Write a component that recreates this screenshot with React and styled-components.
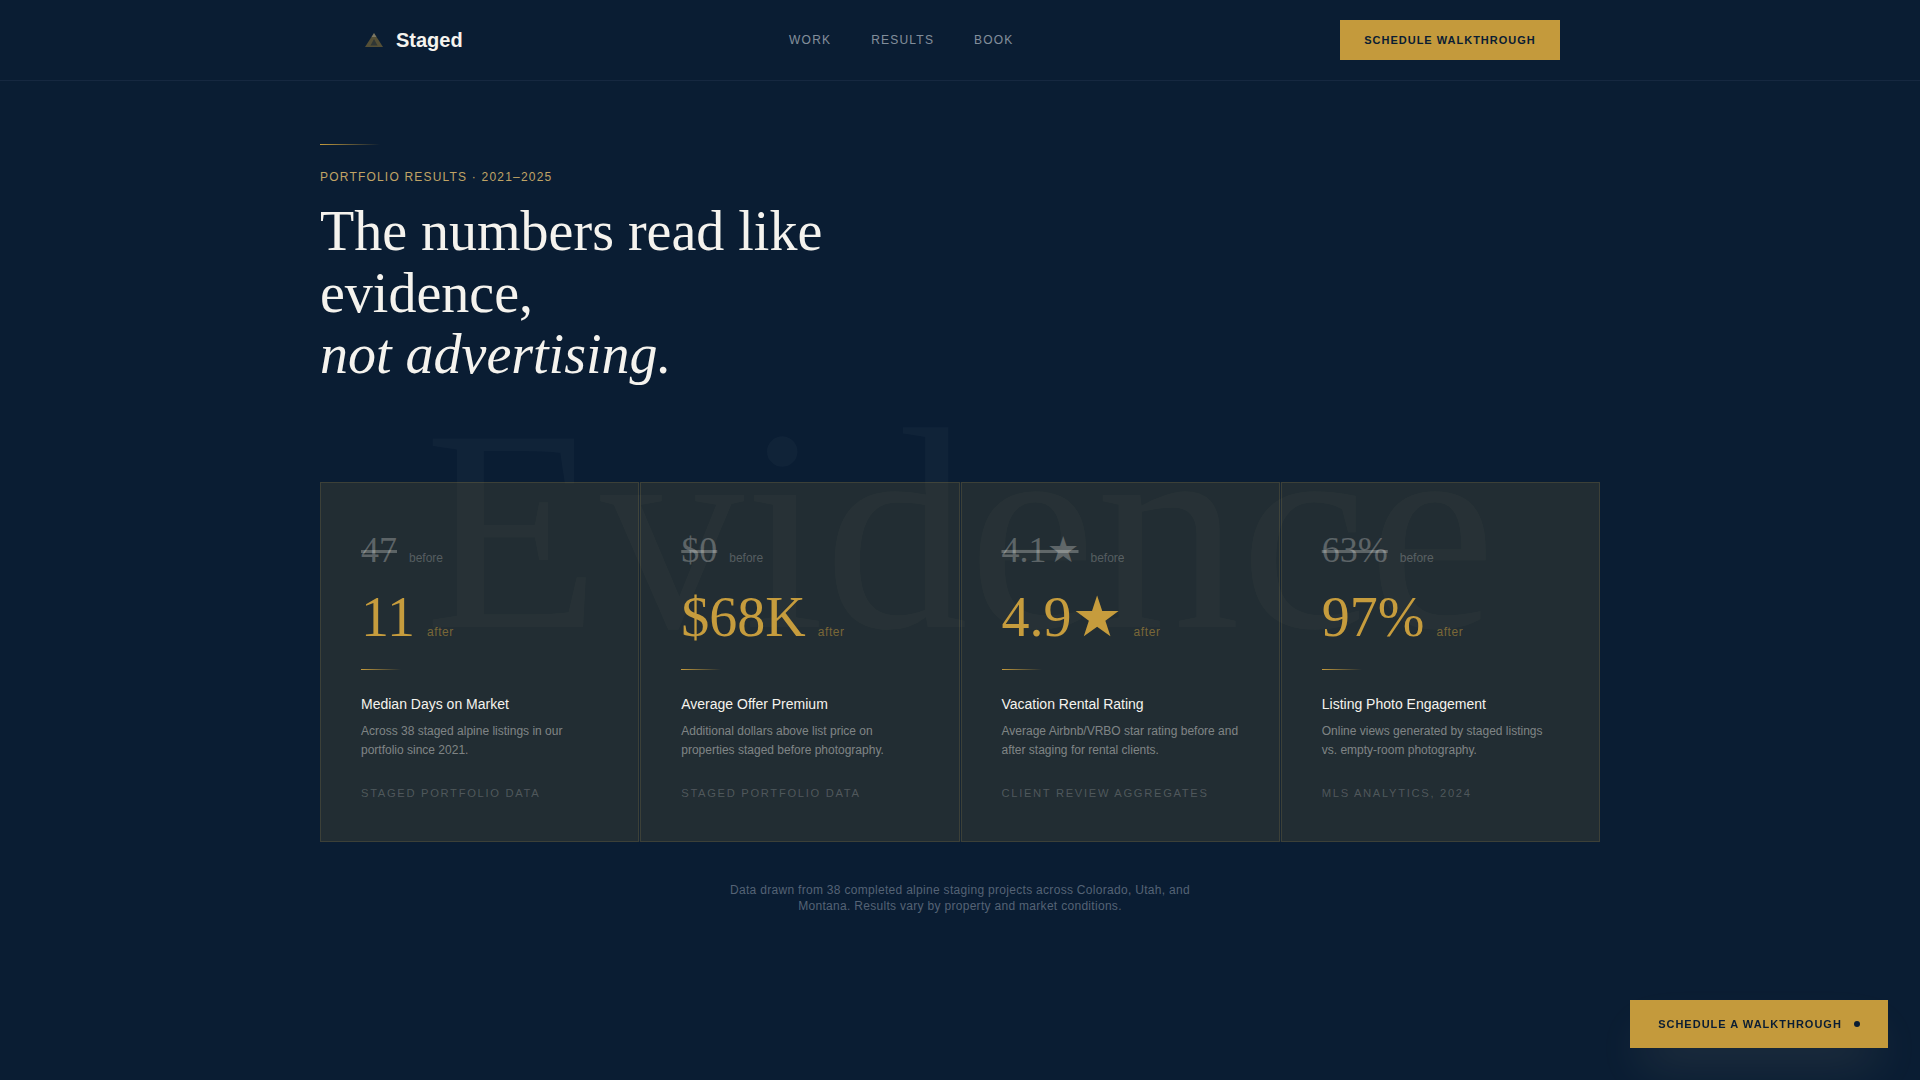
import React from 'react'
import styled, { createGlobalStyle } from 'styled-components'

const GlobalStyle = createGlobalStyle`
  html, body {
    margin: 0;
    padding: 0;
    background: #0a1d33;
    font-family: "Liberation Sans", Arial, sans-serif;
  }
  * {
    box-sizing: border-box;
  }
`

const Page = styled.div`
  position: relative;
  min-height: 1080px;
  overflow: hidden;
  background: #0a1d33;
`

const Header = styled.header`
  height: 81px;
  border-bottom: 1px solid #162840;
`

const HeaderInner = styled.div`
  width: 1280px;
  height: 80px;
  margin: 0 auto;
  padding: 0 40px;
  display: flex;
  align-items: center;
  justify-content: space-between;
`

const Logo = styled.a`
  display: flex;
  align-items: center;
  gap: 12px;
  color: #f5f3ee;
  font-size: 20px;
  font-weight: 700;
`

const Nav = styled.nav`
  display: flex;
  gap: 40px;
`

const NavLink = styled.a`
  color: rgba(235, 240, 245, 0.55);
  font-size: 12px;
  letter-spacing: 0.1em;
`

const HeaderButton = styled.button`
  width: 220px;
  height: 40px;
  border: 0;
  background: #c49a3c;
  color: #0a1d33;
  font-family: inherit;
  font-size: 11px;
  font-weight: 700;
  letter-spacing: 1px;
`

const Main = styled.main`
  position: relative;
  width: 1280px;
  margin: 0 auto;
  padding-top: 63px;
`

const Accent = styled.div`
  width: ${(p) => p.$width}px;
  height: 1px;
  background: linear-gradient(90deg, #c49a3c, transparent);
`

const Eyebrow = styled.p`
  margin: 24px 0 0;
  color: #c0a465;
  font-size: 12px;
  line-height: 16px;
  letter-spacing: 0.1em;
`

const Title = styled.h1`
  width: 640px;
  margin: 16px 0 0;
  color: #f5f3ee;
  font-family: "Liberation Serif", "Times New Roman", serif;
  font-size: 56px;
  font-weight: 400;
  line-height: 1.1;

  em {
    font-style: italic;
  }
`

const Watermark = styled.div`
  position: absolute;
  left: 0;
  right: 0;
  top: 305px;
  text-align: center;
  color: rgba(255, 255, 255, 0.028);
  font-family: "Liberation Serif", "Times New Roman", serif;
  font-size: 288px;
  line-height: 1;
  white-space: nowrap;
  pointer-events: none;
`

const Cards = styled.section`
  position: relative;
  display: grid;
  grid-template-columns: repeat(4, 1fr);
  gap: 1px;
  margin-top: 96px;
  background: rgba(196, 160, 48, 0.06);
`

const Card = styled.article`
  height: 360px;
  padding: 47px 40px 40px;
  background: rgba(196, 160, 48, 0.075);
  border: 1px solid rgba(196, 170, 90, 0.16);
`

const ValueRow = styled.div`
  display: flex;
  align-items: baseline;
  gap: 12px;
  margin-bottom: ${(p) => p.$after || 0}px;
`

const Before = styled.span`
  color: rgba(245, 243, 238, 0.28);
  font-family: "Liberation Serif", "Times New Roman", serif;
  font-size: 36px;
  line-height: 40px;
  text-decoration: line-through;
`

const After = styled.span`
  color: #c69c3d;
  font-family: "Liberation Serif", "Times New Roman", serif;
  font-size: 56px;
  line-height: 64px;
`

const Tag = styled.span`
  color: ${(p) => (p.$gold ? 'rgba(196, 154, 60, 0.55)' : 'rgba(245, 243, 238, 0.25)')};
  font-size: 12px;
  letter-spacing: ${(p) => (p.$gold ? '0.05em' : '0')};
`

const CardTitle = styled.h3`
  margin: 24px 0 0;
  color: #f5f3ee;
  font-size: 14px;
  font-weight: 400;
  line-height: 20px;
`

const CardText = styled.p`
  margin: 8px 0 0;
  color: rgba(245, 243, 238, 0.45);
  font-size: 12px;
  line-height: 19px;
`

const Source = styled.p`
  margin: 25px 0 0;
  color: rgba(245, 243, 238, 0.22);
  font-size: 11.2px;
  line-height: 16px;
  letter-spacing: 0.15em;
`

const Note = styled.p`
  width: 480px;
  margin: 40px auto 0;
  color: rgba(160, 170, 185, 0.5);
  font-size: 12px;
  line-height: 16px;
  letter-spacing: 0.3px;
  text-align: center;
`

const FloatButton = styled.button`
  position: fixed;
  right: 32px;
  bottom: 32px;
  display: flex;
  align-items: center;
  justify-content: center;
  gap: 12px;
  width: 258px;
  height: 48px;
  border: 0;
  background: #c49a3c;
  color: #0a1d33;
  font-family: inherit;
  font-size: 11px;
  font-weight: 700;
  letter-spacing: 1px;
  box-shadow: 0 24px 48px -12px rgba(230, 210, 170, 0.16);
`

const Dot = styled.span`
  width: 6px;
  height: 6px;
  border-radius: 50%;
  background: #0a1d33;
`

const stats = [
  {
    before: '47',
    after: '11',
    title: 'Median Days on Market',
    text: 'Across 38 staged alpine listings in our portfolio since 2021.',
    source: 'STAGED PORTFOLIO DATA',
  },
  {
    before: '$0',
    after: '$68K',
    title: 'Average Offer Premium',
    text: 'Additional dollars above list price on properties staged before photography.',
    source: 'STAGED PORTFOLIO DATA',
  },
  {
    before: '4.1★',
    after: '4.9★',
    title: 'Vacation Rental Rating',
    text: 'Average Airbnb/VRBO star rating before and after staging for rental clients.',
    source: 'CLIENT REVIEW AGGREGATES',
  },
  {
    before: '63%',
    after: '97%',
    title: 'Listing Photo Engagement',
    text: 'Online views generated by staged listings vs. empty-room photography.',
    source: 'MLS ANALYTICS, 2024',
  },
]

const LogoMark = () => (
  <svg width="24" height="24" viewBox="0 0 24 24">
    <path d="M14 5 L23 19 H5 Z" fill="#c49a3c" opacity="0.4" />
    <path d="M14 5 L16.5 9 H11.5 Z" fill="#f5f3ee" opacity="0.25" />
    <path d="M14 11 L17.5 17.5 H10.5 Z" fill="#0a1d33" opacity="0.5" />
  </svg>
)

const App = () => {
  return (
    <Page>
      <GlobalStyle />
      <Header>
        <HeaderInner>
          <Logo>
            <LogoMark />
            Staged
          </Logo>
          <Nav>
            <NavLink>WORK</NavLink>
            <NavLink>RESULTS</NavLink>
            <NavLink>BOOK</NavLink>
          </Nav>
          <HeaderButton>SCHEDULE WALKTHROUGH</HeaderButton>
        </HeaderInner>
      </Header>
      <Main>
        <Accent $width={60} />
        <Eyebrow>PORTFOLIO RESULTS · 2021–2025</Eyebrow>
        <Title>
          The numbers read like evidence,
          <br />
          <em>not advertising.</em>
        </Title>
        <Watermark>Evidence</Watermark>
        <Cards>
          {stats.map((s) => (
            <Card key={s.title}>
              <ValueRow $after={15}>
                <Before>{s.before}</Before>
                <Tag>before</Tag>
              </ValueRow>
              <ValueRow $after={20}>
                <After>{s.after}</After>
                <Tag $gold>after</Tag>
              </ValueRow>
              <Accent $width={40} />
              <CardTitle>{s.title}</CardTitle>
              <CardText>{s.text}</CardText>
              <Source>{s.source}</Source>
            </Card>
          ))}
        </Cards>
        <Note>
          Data drawn from 38 completed alpine staging projects across Colorado, Utah, and Montana.
          Results vary by property and market conditions.
        </Note>
      </Main>
      <FloatButton>
        SCHEDULE A WALKTHROUGH
        <Dot />
      </FloatButton>
    </Page>
  )
}

export default App
